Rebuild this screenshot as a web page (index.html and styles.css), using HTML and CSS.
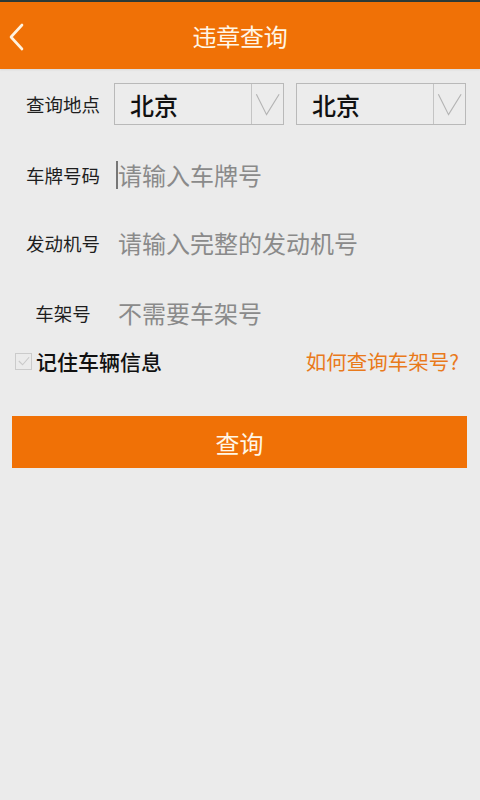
FILE: index.html
```html
<!DOCTYPE html>
<html lang="zh-CN">
<head>
<meta charset="utf-8">
<title>违章查询</title>
<link rel="stylesheet" href="styles.css">
</head>
<body>
<div class="statusbar"></div>
<header class="topbar">
  <span class="back">
    <svg width="20" height="30" viewBox="0 0 20 30"><polyline points="13,3 2,15 13,27" fill="none" stroke="#fff3e0" stroke-width="2.6" stroke-linecap="round" stroke-linejoin="round"/></svg>
  </span>
  <h1 class="title">违章查询</h1>
</header>
<main class="form">
  <div class="row row-place">
    <span class="label">查询地点</span>
    <div class="selects">
      <div class="select">
        <span class="select-text">北京</span>
        <span class="select-arrow"><svg width="32" height="40" viewBox="0 0 32 40"><polyline points="4.5,10 15,31 28,10" fill="none" stroke="#b4b4b4" stroke-width="1.2"/></svg></span>
      </div>
      <div class="select">
        <span class="select-text">北京</span>
        <span class="select-arrow"><svg width="32" height="40" viewBox="0 0 32 40"><polyline points="4.5,10 15,31 28,10" fill="none" stroke="#b4b4b4" stroke-width="1.2"/></svg></span>
      </div>
    </div>
  </div>
  <div class="row row-plate">
    <span class="label">车牌号码</span>
    <div class="field"><span class="caret"></span><span class="placeholder">请输入车牌号</span></div>
  </div>
  <div class="row row-engine">
    <span class="label">发动机号</span>
    <div class="field"><span class="placeholder">请输入完整的发动机号</span></div>
  </div>
  <div class="row row-frame">
    <span class="label">车架号</span>
    <div class="field"><span class="placeholder">不需要车架号</span></div>
  </div>
  <div class="remember">
    <label class="check">
      <span class="box"><svg width="16" height="16" viewBox="0 0 16 16"><polyline points="3,8 7,12 14,4" fill="none" stroke="#c9c9c9" stroke-width="1.2"/></svg></span>
      <span class="check-text">记住车辆信息</span>
    </label>
    <a class="help">如何查询车架号?</a>
  </div>
  <button class="submit">查询</button>
</main>
</body>
</html>
```
FILE: styles.css
```css
html, body {
  margin: 0;
  padding: 0;
}
body {
  width: 480px;
  height: 800px;
  background: #ebebeb;
  font-family: "Noto Sans CJK SC", "Noto Sans", sans-serif;
  overflow: hidden;
}
.statusbar {
  height: 2px;
  background: #2b3a38;
}
.topbar {
  height: 67px;
  background: #f07106;
  display: flex;
  align-items: center;
  justify-content: center;
  position: relative;
  box-shadow: 0 1px 2px rgba(0,0,0,0.08);
}
.back {
  position: absolute;
  left: 9px;
  top: 20px;
  width: 20px;
  height: 30px;
}
.back svg { display: block; }
.title {
  margin: 0;
  font-size: 24px;
  font-weight: 400;
  color: #fff6e6;
  line-height: 1;
  letter-spacing: -0.2px;
}
.form {
  display: flex;
  flex-direction: column;
  padding: 14px 12px 0 12px;
}
.row {
  display: flex;
  align-items: center;
}
.label {
  width: 76px;
  margin-left: 13px;
  text-align: center;
  font-size: 18.5px;
  color: #1e1e1e;
  line-height: 1;
  flex-shrink: 0;
  white-space: nowrap;
}
.row-place {
  height: 42px;
}
.selects {
  display: flex;
  gap: 12px;
  margin-left: 13px;
}
.select {
  width: 168px;
  height: 40px;
  border: 1px solid #b9b9b9;
  background: #ececec;
  display: flex;
  align-items: stretch;
}
.select-text {
  flex: 1;
  display: flex;
  align-items: center;
  padding-left: 15px;
  font-size: 24px;
  color: #111;
  font-weight: 500;
}
.select-arrow {
  width: 31px;
  border-left: 1px solid #c4c4c4;
  display: flex;
  align-items: center;
  justify-content: center;
}
.select-arrow svg { display: block; }
.row-plate {
  margin-top: 16px;
  height: 68px;
}
.row-engine {
  height: 68px;
}
.row-frame {
  margin-top: 2px;
  height: 68px;
}
.field {
  margin-left: 17px;
  display: flex;
  align-items: center;
  height: 40px;
}
.placeholder {
  font-size: 24px;
  color: #8a8a8a;
  line-height: 1;
}
.caret {
  width: 2px;
  height: 28px;
  background: #777;
  margin-left: -2px;
}
.remember {
  height: 32px;
  margin-top: -2px;
  display: flex;
  align-items: center;
  justify-content: space-between;
}
.check {
  display: flex;
  align-items: center;
  margin-left: 3px;
}
.box {
  width: 17px;
  height: 17px;
  border: 1px solid #cbcbcb;
  display: flex;
  align-items: center;
  justify-content: center;
  box-sizing: border-box;
}
.box svg { display: block; }
.check-text {
  margin-left: 4px;
  font-size: 21px;
  color: #111;
  font-weight: 500;
  line-height: 1;
}
.help {
  font-size: 20.5px;
  color: #e97a1c;
  line-height: 1;
  margin-right: 9px;
}
.submit {
  margin-top: 39px;
  height: 52px;
  width: 455px;
  border: none;
  background: #f07106;
  color: #fff6e6;
  font-family: "Noto Sans CJK SC", "Noto Sans", sans-serif;
  font-size: 24px;
  padding: 0;
  border-radius: 0;
}
```
